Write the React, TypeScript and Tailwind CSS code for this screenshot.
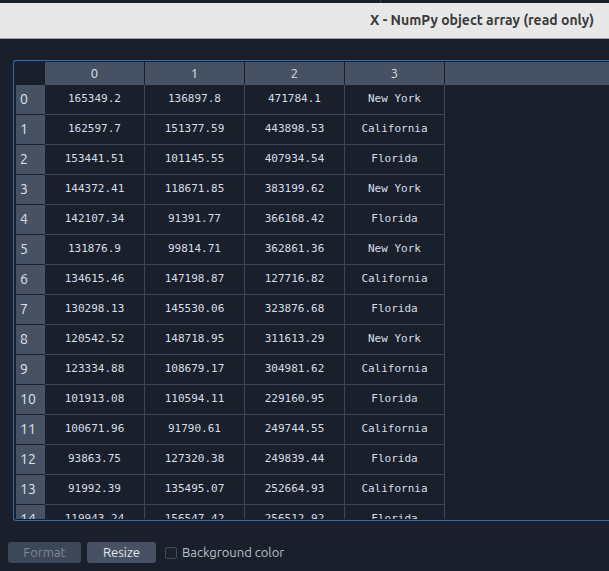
const rows: [string, string, string, string][] = [
  ["165349.2", "136897.8", "471784.1", "New York"],
  ["162597.7", "151377.59", "443898.53", "California"],
  ["153441.51", "101145.55", "407934.54", "Florida"],
  ["144372.41", "118671.85", "383199.62", "New York"],
  ["142107.34", "91391.77", "366168.42", "Florida"],
  ["131876.9", "99814.71", "362861.36", "New York"],
  ["134615.46", "147198.87", "127716.82", "California"],
  ["130298.13", "145530.06", "323876.68", "Florida"],
  ["120542.52", "148718.95", "311613.29", "New York"],
  ["123334.88", "108679.17", "304981.62", "California"],
  ["101913.08", "110594.11", "229160.95", "Florida"],
  ["100671.96", "91790.61", "249744.55", "California"],
  ["93863.75", "127320.38", "249839.44", "Florida"],
  ["91992.39", "135495.07", "252664.93", "California"],
  ["119943.24", "156547.42", "256512.92", "Florida"],
];

const sans = "font-['Ubuntu','Noto_Sans','DejaVu_Sans',sans-serif]";

export default function App() {
  return (
    <div className="w-[609px] h-[571px] bg-[#19202b] flex flex-col overflow-hidden">
      {/* top strip */}
      <div className="h-[3px] bg-[#1c2028] flex">
        <div className="w-[380px]" />
        <div className="w-px bg-[#3a3f47]" />
      </div>

      {/* title bar */}
      <div className="h-[36px] bg-[#e8e8e8] border-b border-[#a3a3a3] flex items-center justify-end pr-[15px]">
        <span className={`${sans} text-[14px] font-bold text-[#3a3a3a]`}>
          X - NumPy object array (read only)
        </span>
      </div>

      {/* table frame */}
      <div className="pt-[21px] pl-[13px]">
        <div className="h-[461px] border-t border-l border-b border-[#2e6db0] rounded-l-[3px] pt-px pl-[2px] pb-px overflow-hidden">
          <div className="h-full overflow-hidden">
            {/* header */}
            <div className="flex h-[23px] bg-[#465263]">
              <div className="w-[29px] bg-[#19202b]" />
              {["0", "1", "2", "3"].map((h) => (
                <div
                  key={h}
                  className={`${sans} w-[100px] border-r border-[#19202b] flex items-center justify-center text-[13px] text-[#dde3ea]`}
                >
                  {h}
                </div>
              ))}
            </div>

            {/* rows */}
            {rows.map((r, i) => (
              <div key={i} className="flex h-[30px]">
                <div className="w-[29px] border-b border-[#19202b] bg-[#465263] flex items-center pl-[4px]">
                  <span className={`${sans} text-[14px] text-[#dde3ea]`}>{i}</span>
                </div>
                {r.map((v, j) => (
                  <div
                    key={j}
                    className="w-[100px] border-r border-b border-[#3d4757] flex items-center justify-center font-['DejaVu_Sans_Mono',monospace] text-[11px] text-[#d8dee9]"
                  >
                    {v}
                  </div>
                ))}
              </div>
            ))}
          </div>
        </div>
      </div>

      {/* bottom controls */}
      <div className={`${sans} flex items-center pl-[8px] mt-[21px] text-[13px]`}>
        <button className="w-[73px] h-[21px] rounded-[3px] bg-[#3c4757] text-[#7d8999]">
          Format
        </button>
        <button className="ml-[6px] w-[69px] h-[21px] rounded-[3px] bg-[#465263] text-[#e3e7ec]">
          Resize
        </button>
        <span className="ml-[9px] w-[12px] h-[12px] rounded-[2px] border border-[#414b59] bg-[#1b222c]" />
        <span className="ml-[5px] text-[#b9c1cc]">Background color</span>
      </div>
    </div>
  );
}
